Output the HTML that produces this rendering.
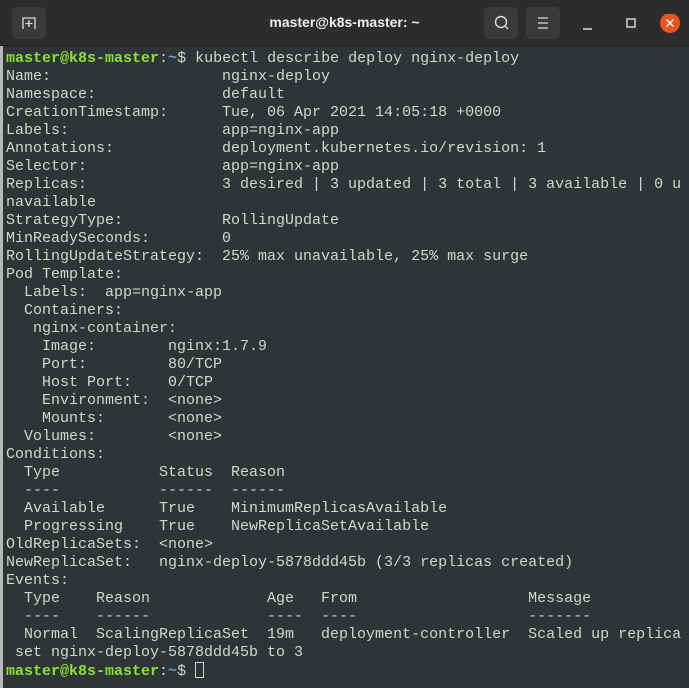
<!DOCTYPE html>
<html><head><style>
html,body{margin:0;padding:0;width:689px;height:688px;overflow:hidden;background:#2f3437;}
.tb{position:absolute;left:0;top:0;width:689px;height:46px;background:#2c2c2c;border-bottom:1px solid #1e1e1e;box-sizing:border-box;}
.btn{position:absolute;top:7px;width:34px;height:32px;background:#3a3a3a;border-radius:5px;}
.title{position:absolute;left:0;right:0;top:14px;text-align:center;color:#eee;font:bold 14px "Liberation Sans",sans-serif;}
.term{position:absolute;left:0;top:46px;width:689px;height:642px;background:#2f3437;border-left:3px solid #b8b8b8;box-sizing:border-box;}
pre{position:absolute;left:3px;top:4px;margin:0;font:15px/18px "Liberation Mono",monospace;color:#d3d7cf;white-space:pre;letter-spacing:0;}
.g{color:#8ae234;font-weight:bold}.b{color:#729fcf;font-weight:bold}
.cur{display:inline-block;width:9px;height:16px;border:1px solid #d3d7cf;box-sizing:border-box;vertical-align:-3px;}
</style></head><body>
<div class="tb">
<div class="btn" style="left:12px"><svg width="34" height="32"><path d="M11 22V11h12v11M17 13v7M13.5 16.5h7" stroke="#ddd" stroke-width="1.3" fill="none"/></svg></div>
<div class="title">master@k8s-master: ~</div>
<div class="btn" style="left:484px"><svg width="34" height="32"><circle cx="17" cy="15" r="5.5" stroke="#ddd" stroke-width="1.4" fill="none"/><path d="M21 19l3 3" stroke="#ddd" stroke-width="1.4"/></svg></div>
<div class="btn" style="left:526px"><svg width="34" height="32"><path d="M12 11h10M12 16h10M12 21h10" stroke="#ddd" stroke-width="1.3"/></svg></div>
<svg style="position:absolute;left:580px;top:14px" width="100" height="20"><path d="M3 15h9" stroke="#ddd" stroke-width="1.5"/><rect x="47" y="5" width="8" height="8" stroke="#ddd" stroke-width="1.4" fill="none"/><circle cx="90" cy="9" r="10" fill="#e95420"/><path d="M86.5 5.5l7 7M93.5 5.5l-7 7" stroke="#fff" stroke-width="1.4"/></svg>
</div>
<div class="term"><pre><span class="g">master@k8s-master</span>:<span class="b">~</span>$ kubectl describe deploy nginx-deploy
Name:                   nginx-deploy
Namespace:              default
CreationTimestamp:      Tue, 06 Apr 2021 14:05:18 +0000
Labels:                 app=nginx-app
Annotations:            deployment.kubernetes.io/revision: 1
Selector:               app=nginx-app
Replicas:               3 desired | 3 updated | 3 total | 3 available | 0 u
navailable
StrategyType:           RollingUpdate
MinReadySeconds:        0
RollingUpdateStrategy:  25% max unavailable, 25% max surge
Pod Template:
  Labels:  app=nginx-app
  Containers:
   nginx-container:
    Image:        nginx:1.7.9
    Port:         80/TCP
    Host Port:    0/TCP
    Environment:  &lt;none&gt;
    Mounts:       &lt;none&gt;
  Volumes:        &lt;none&gt;
Conditions:
  Type           Status  Reason
  ----           ------  ------
  Available      True    MinimumReplicasAvailable
  Progressing    True    NewReplicaSetAvailable
OldReplicaSets:  &lt;none&gt;
NewReplicaSet:   nginx-deploy-5878ddd45b (3/3 replicas created)
Events:
  Type    Reason             Age   From                   Message
  ----    ------             ----  ----                   -------
  Normal  ScalingReplicaSet  19m   deployment-controller  Scaled up replica
 set nginx-deploy-5878ddd45b to 3
<span class="g">master@k8s-master</span>:<span class="b">~</span>$ <span class="cur"></span></pre></div>
</body></html>
